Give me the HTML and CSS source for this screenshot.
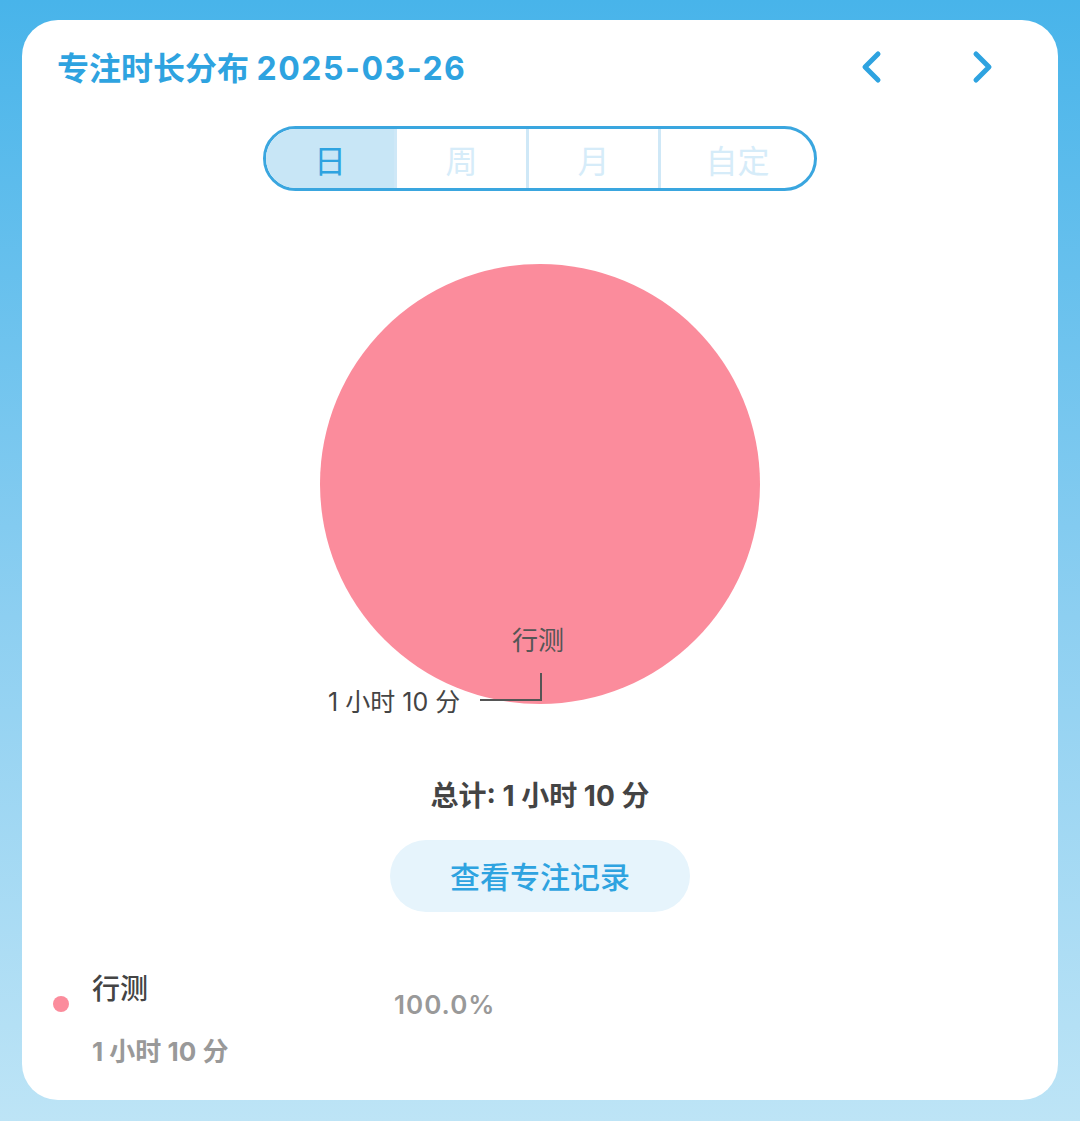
FILE: index.html
```html
<!DOCTYPE html>
<html lang="zh">
<head>
    <meta charset="UTF-8">
    <title>专注时长分布</title>
    <link rel="stylesheet" href="styles.css">
</head>
<body>
    <div class="card">
        <div class="head">
            <h2 class="title">专注时长分布 <span class="num">2025-03-26</span></h2>
            <div class="arrows">
                <svg class="arrow" width="24" height="34" viewBox="0 0 24 34"><path d="M19 4 L6 17 L19 30" fill="none" stroke="#2ea3e0" stroke-width="5" stroke-linecap="round" stroke-linejoin="round"/></svg>
                <svg class="arrow" width="24" height="34" viewBox="0 0 24 34"><path d="M5 4 L18 17 L5 30" fill="none" stroke="#2ea3e0" stroke-width="5" stroke-linecap="round" stroke-linejoin="round"/></svg>
            </div>
        </div>

        <div class="tabs">
            <span class="tab active">日</span>
            <span class="tab">周</span>
            <span class="tab">月</span>
            <span class="tab wide">自定</span>
        </div>

        <div class="chart">
            <div class="pie"></div>
            <span class="pie-name">行测</span>
            <span class="pie-value">1 小时 10 分</span>
            <span class="leader"></span>
        </div>

        <p class="total">总计: 1 小时 10 分</p>
        <div class="btn-row">
            <button class="btn">查看专注记录</button>
        </div>

        <div class="legend">
            <span class="dot"></span>
            <div class="legend-text">
                <span class="legend-name">行测</span>
                <span class="legend-time">1 小时 10 分</span>
            </div>
            <span class="legend-pct">100.0%</span>
        </div>
    </div>
</body>
</html>
```

FILE: styles.css
```css
html, body {
    margin: 0;
    height: 100%;
}
body {
    font-family: Inter, "Noto Sans CJK SC", sans-serif;
    background: linear-gradient(180deg, #48b4ea 0%, #8dcff1 55%, #bde4f6 100%);
    padding: 20px 22px 0;
    box-sizing: border-box;
}
.card {
    background: #fff;
    border-radius: 36px;
    height: 1080px;
    box-sizing: border-box;
    padding: 0 35px;
}
.head {
    display: flex;
    align-items: center;
    justify-content: space-between;
    height: 92px;
}
.title {
    margin: 0;
    font-size: 32px;
    font-weight: 700;
    color: #2ea3e0;
}
.title .num {
    letter-spacing: 1.5px;
}
.arrows {
    display: flex;
    gap: 88px;
    margin-right: 28px;
    margin-top: 2px;
}
.arrow {
    display: block;
}
.tabs {
    display: flex;
    width: 554px;
    height: 65px;
    margin: 14px auto 0;
    box-sizing: border-box;
    border: 3px solid #3aa6df;
    border-radius: 33px;
    overflow: hidden;
}
.tab {
    width: 129px;
    display: flex;
    align-items: center;
    justify-content: center;
    font-size: 32px;
    color: #d6ecf9;
    border-left: 3px solid #cfe8f7;
}
.tab:first-child {
    width: 128px;
    border-left: none;
}
.tab.wide {
    flex: 1;
}
.tab.active {
    background: #c8e6f6;
    color: #2ea3e0;
}
.chart {
    position: relative;
    height: 440px;
    margin-top: 73px;
}
.pie {
    width: 440px;
    height: 440px;
    border-radius: 50%;
    background: #fb8c9c;
    margin: 0 auto;
}
.pie-name {
    position: absolute;
    left: 455px;
    top: 356px;
    font-size: 26px;
    color: #555;
}
.pie-value {
    position: absolute;
    left: 271px;
    top: 418px;
    font-size: 25px;
    color: #444;
}
.leader {
    position: absolute;
    left: 423px;
    top: 409px;
    width: 60px;
    height: 26px;
    border-right: 2px solid #555;
    border-bottom: 2px solid #555;
}
.total {
    margin: 70px 0 0;
    text-align: center;
    font-size: 28px;
    font-weight: 700;
    color: #444;
}
.btn-row {
    display: flex;
    justify-content: center;
    margin-top: 26px;
}
.btn {
    width: 300px;
    height: 72px;
    border: none;
    border-radius: 36px;
    background: #e6f4fc;
    font-family: inherit;
    font-size: 30px;
    font-weight: 500;
    color: #2ea3e0;
    padding-bottom: 4px;
}
.legend {
    display: flex;
    align-items: flex-start;
    margin-top: 55px;
    margin-left: -4px;
}
.dot {
    width: 16px;
    height: 16px;
    border-radius: 50%;
    background: #fb8c9c;
    margin-top: 29px;
}
.legend-text {
    display: flex;
    flex-direction: column;
    gap: 24px;
    margin-left: 23px;
    width: 302px;
}
.legend-name {
    font-size: 28px;
    font-weight: 500;
    color: #444;
}
.legend-time {
    font-size: 26px;
    font-weight: 700;
    color: #999;
}
.legend-pct {
    font-size: 26px;
    font-weight: 600;
    color: #999;
    letter-spacing: 1px;
    margin-top: 22px;
}
```
